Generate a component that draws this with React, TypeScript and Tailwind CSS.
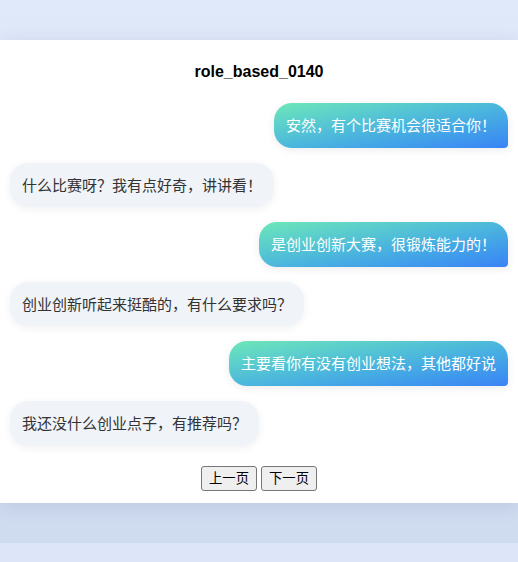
const messages = [
  { role: "me", text: "安然，有个比赛机会很适合你！" },
  { role: "other", text: "什么比赛呀？我有点好奇，讲讲看！" },
  { role: "me", text: "是创业创新大赛，很锻炼能力的！" },
  { role: "other", text: "创业创新听起来挺酷的，有什么要求吗？" },
  { role: "me", text: "主要看你有没有创业想法，其他都好说" },
  { role: "other", text: "我还没什么创业点子，有推荐吗？" },
];

export default function App() {
  return (
    <div className="min-h-[562px] bg-[#dce6f8]">
      <div className="bg-linear-to-b from-[#e0e9fa] to-[#cfdcf0] py-10">
        <div className="bg-white pt-5 pb-3 px-[10px] shadow-[0_4px_18px_rgba(40,60,100,0.12)]">
          <h3 className="text-center text-[16px] leading-6 font-bold text-black font-['Liberation_Sans',sans-serif] mb-[19px]">
            role_based_0140
          </h3>
          <div className="flex flex-col gap-[15px] font-['Noto_Sans_CJK_SC',sans-serif] text-[15px] leading-[20.6px]">
            {messages.map((m, i) =>
              m.role === "me" ? (
                <div key={i} className="flex justify-end">
                  <div className="px-3 py-3 rounded-[18px] rounded-br-[4px] text-white bg-linear-to-br from-[#6ee7b7] to-[#3b82f6] shadow-[0_2px_8px_rgba(0,0,0,0.08)]">
                    {m.text}
                  </div>
                </div>
              ) : (
                <div key={i} className="flex justify-start">
                  <div className="px-3 py-3 rounded-[18px] text-[#333] bg-[#f0f4f9] shadow-[0_2px_8px_rgba(0,0,0,0.06)]">
                    {m.text}
                  </div>
                </div>
              )
            )}
          </div>
          <div className="mt-5 flex justify-center gap-1 font-['Noto_Sans_CJK_SC',sans-serif] text-[13.33px]">
            <button className="h-[25px] px-[7px] border border-[#767676] rounded-[3px] bg-[#efefef] text-black leading-none">
              上一页
            </button>
            <button className="h-[25px] px-[7px] border border-[#767676] rounded-[3px] bg-[#efefef] text-black leading-none">
              下一页
            </button>
          </div>
        </div>
      </div>
    </div>
  );
}
